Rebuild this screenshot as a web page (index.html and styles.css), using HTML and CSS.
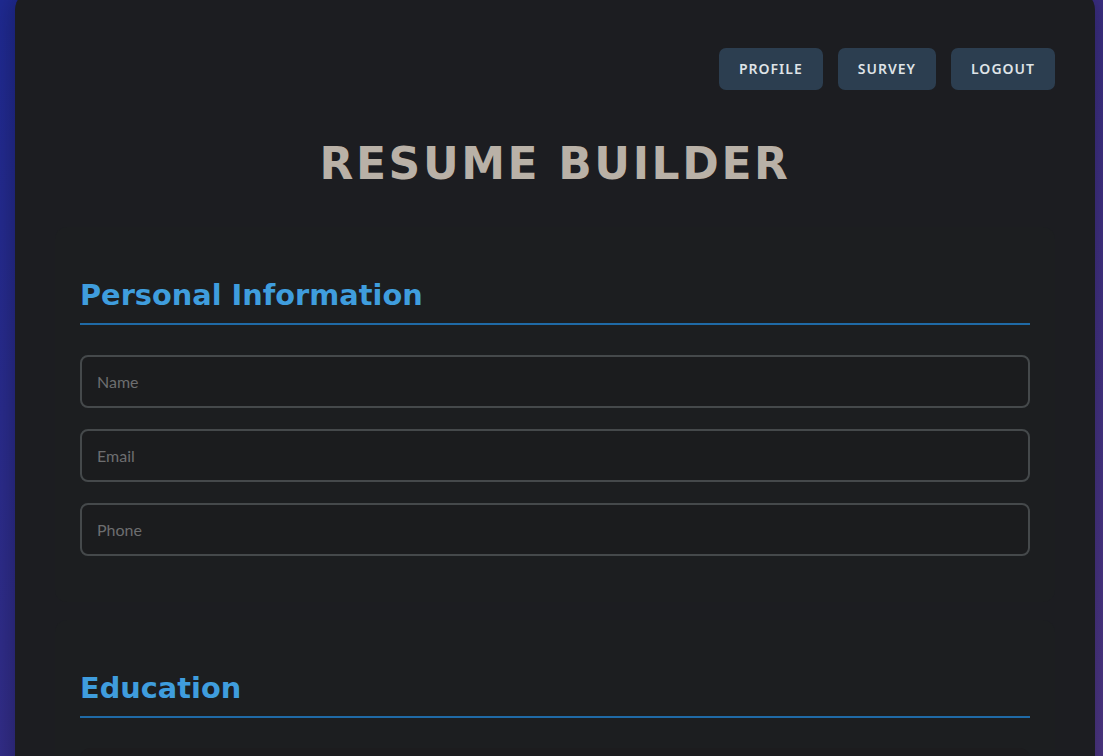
FILE: index.html
```
<!doctype html>
<html lang="en">
    <head>
        <meta charset="utf-8">
        <title>Resume Builder</title>
        <link rel="stylesheet" href="styles.css">
    </head>
    <body>
        <div class="builder">
            <nav class="builder__nav">
                <button class="builder__nav-btn">Profile</button>
                <button class="builder__nav-btn">Survey</button>
                <button class="builder__nav-btn">Logout</button>
            </nav>

            <h1 class="builder__title">Resume Builder</h1>

            <section class="builder__section">
                <h2 class="builder__heading">Personal Information</h2>
                <input class="builder__input" type="text" placeholder="Name">
                <input class="builder__input" type="email" placeholder="Email">
                <input class="builder__input" type="tel" placeholder="Phone">
            </section>

            <section class="builder__section">
                <h2 class="builder__heading">Education</h2>
                <div class="builder__entry">
                    <input class="builder__input" type="text" placeholder="School">
                    <input class="builder__input" type="text" placeholder="Degree">
                </div>
            </section>
        </div>
    </body>
</html>
```

FILE: styles.css
```
body {
    background: linear-gradient(135deg, #1f2a93 0%, #3b2f86 50%, #563b8a 100%);
    margin: 0;
    min-height: 100vh;
    overflow: hidden;
}

.builder {
    background: #1c1d21;
    border-radius: 20px;
    box-shadow: 0 0 30px rgba(0, 0, 0, 0.35);
    box-sizing: border-box;
    margin: -10px 0 0 15px;
    padding: 58px 40px 40px;
    width: 1080px;
}

.builder__nav {
    display: flex;
    gap: 15px;
    justify-content: flex-end;
}

.builder__nav-btn {
    background: #2c3e50;
    border: none;
    border-radius: 7px;
    color: #dfe3e7;
    cursor: pointer;
    font-family: "Noto Sans", sans-serif;
    font-size: 14px;
    font-weight: 600;
    height: 42px;
    letter-spacing: 1px;
    padding: 0 20px 2px;
    text-transform: uppercase;
}

.builder__title {
    color: #b9b1a7;
    font-family: "DejaVu Sans", sans-serif;
    font-size: 44px;
    font-weight: 700;
    letter-spacing: 2.6px;
    margin: 48px 0 38px;
    text-align: center;
    text-transform: uppercase;
}

.builder__section {
    background: #1c1e20;
    border-radius: 12px;
    margin-bottom: 18px;
    padding: 25px 25px 25px;
}

.builder__heading {
    border-bottom: 2px solid #1f6aa6;
    color: #3f9ddd;
    font-family: "DejaVu Sans", sans-serif;
    font-size: 28.8px;
    font-weight: 700;
    margin: 26px 0 30px;
    padding-bottom: 11px;
}

.builder__input {
    background: #1b1c1e;
    border: 2px solid #45494b;
    border-radius: 8px;
    box-sizing: border-box;
    color: #ccc;
    display: block;
    font-family: Lato, "Noto Sans", sans-serif;
    font-size: 16px;
    height: 53px;
    margin-bottom: 21px;
    padding: 0 15px;
    width: 100%;
}

.builder__input::placeholder {
    color: #6d6e70;
}

.builder__entry {
    background: #1c1c1e;
    border-radius: 10px;
    padding: 20px;
}
```
